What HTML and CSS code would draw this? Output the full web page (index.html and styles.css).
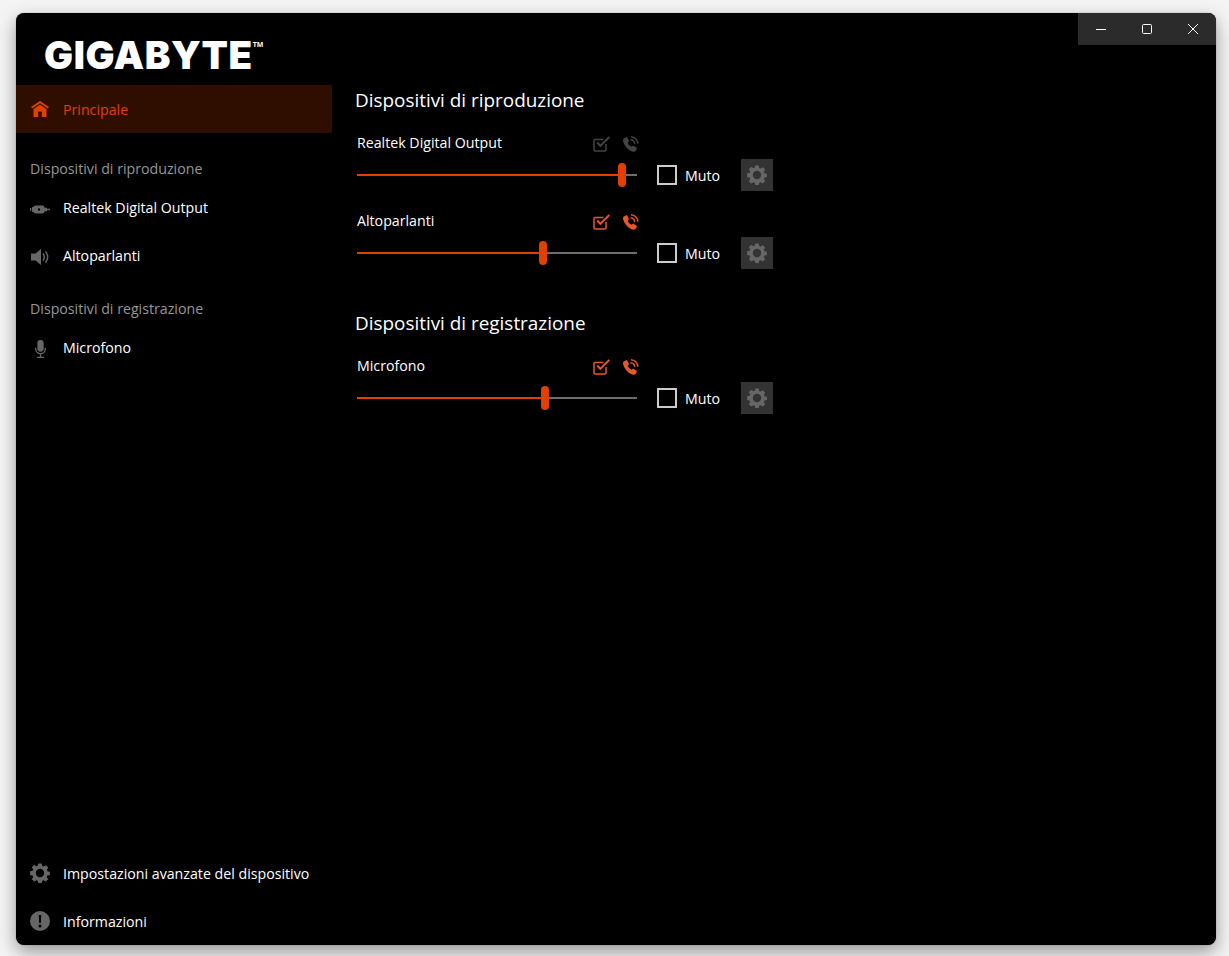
FILE: index.html
```html
<!DOCTYPE html>
<html lang="it">
<head>
<meta charset="utf-8">
<title>GIGABYTE</title>
<link rel="stylesheet" href="styles.css">
</head>
<body>
<svg class="defs" width="0" height="0" aria-hidden="true">
  <defs>
    <symbol id="i-gear" viewBox="0 0 20 20">
      <path fill-rule="evenodd" d="M8.300 0.500h3.400l.5 2.500 1.400.6 2.200-1.400 2.400 2.400-1.400 2.200.6 1.400 2.500.5v3.400l-2.500.5-.6 1.400 1.400 2.200-2.400 2.400-2.200-1.400-1.400.6-.5 2.500H8.300l-.5-2.500-1.400-.6-2.200 1.400-2.400-2.400 1.400-2.200-.6-1.400-2.500-.5V8.300l2.500-.5.6-1.400-1.400-2.200 2.400-2.400 2.200 1.400 1.400-.6zM10 5.800a4.200 4.200 0 1 0 0 8.400 4.200 4.200 0 0 0 0-8.400z"/>
    </symbol>
    <symbol id="i-check" viewBox="0 0 18 16">
      <path fill="none" stroke="currentColor" stroke-width="1.500" d="M13 8v6a1 1 0 0 1-1 1H2a1 1 0 0 1-1-1V4.500a1 1 0 0 1 1-1h8.500"/>
      <path fill="none" stroke="currentColor" stroke-width="1.900" d="M4.300 6.500l3 3.400L16.300 1"/>
    </symbol>
    <symbol id="i-phone" viewBox="0 0 18 16">
      <path fill="currentColor" d="M2.500 2 5 1l2 4-1.200 2c.7 1.600 2.200 3 3.700 3.700l1.700-1.200 3.800 2.500-1 2.500c-1 1.500-3 1.500-5 .5-4-2-7-6-8-10-.2-1.400.4-2.500 1.500-3z"/>
      <path fill="none" stroke="currentColor" stroke-width="1.500" d="M8.500 3.700c2.300.2 4 1.900 4.300 4.200M9 .8c3.700.2 6.500 3 6.900 6.800"/>
    </symbol>
  </defs>
</svg>
<div class="window">
  <aside class="sidebar">
    <div class="brand"><span class="logo">GIGABYTE</span><span class="tm">TM</span></div>
    <nav class="nav">
      <a class="item active">
        <svg class="ico" viewBox="-1 -2 20 20"><path fill="currentColor" d="M9 0 0 6l1.200 1.500L9 2.200l7.800 5.300L18 6zM2.500 8v8h4.700v-5.500h3.600V16h4.700V8L9 3.500z"/></svg>
        <span>Principale</span>
      </a>
      <div class="label first">Dispositivi di riproduzione</div>
      <a class="item">
        <svg class="ico" viewBox="0 -8.500 20 20"><path fill="currentColor" fill-rule="evenodd" d="M0 2.500h1.200v3H0zM2 1.500h1.500v5H2zM5.500 0H12.500a2 2 0 0 1 2 2v4a2 2 0 0 1-2 2H5.500a2 2 0 0 1-2-2V2a2 2 0 0 1 2-2zM9 2.800a1.200 1.200 0 1 0 0 2.400 1.200 1.200 0 0 0 0-2.400zM14.500 2.200H17v3.600h-2.500zM17 3.200H20v1.600h-3z"/></svg>
        <span>Realtek Digital Output</span>
      </a>
      <a class="item">
        <svg class="ico" viewBox="-1 -4 20 20"><path fill="currentColor" d="M0 4.500h4.500L10 0v16l-5.500-4.500H0z"/><path fill="none" stroke="currentColor" stroke-width="1.500" d="M12 4.500c1.700 1.800 1.700 5.200 0 7M14.500 2.500c2.900 3 2.900 8 0 11"/></svg>
        <span>Altoparlanti</span>
      </a>
      <div class="label">Dispositivi di registrazione</div>
      <a class="item">
        <svg class="ico" viewBox="-1.670 -3.330 22.200 22.200"><rect x="6.500" y="0" width="7" height="13" rx="3.500" fill="currentColor"/><path fill="none" stroke="currentColor" stroke-width="1.500" d="M4.700 8.500v1.500c0 3 2.300 5.200 5.300 5.200s5.300-2.200 5.300-5.200V8.500M10 15v4M6 19.300h8"/></svg>
        <span>Microfono</span>
      </a>
    </nav>
    <div class="nav-bottom">
      <a class="item">
        <svg class="ico"><use href="#i-gear"/></svg>
        <span>Impostazioni avanzate del dispositivo</span>
      </a>
      <a class="item">
        <svg class="ico" viewBox="0 0 20 20"><path fill="currentColor" fill-rule="evenodd" d="M10 0a10 10 0 1 1 0 20 10 10 0 0 1 0-20zM8.800 4l.4 8h1.600l.4-8zM10 13.400a1.500 1.500 0 1 0 0 3 1.500 1.500 0 0 0 0-3z"/></svg>
        <span>Informazioni</span>
      </a>
    </div>
  </aside>
  <main class="main">
    <div class="caption">
      <button class="cap-btn" aria-label="Riduci"><svg viewBox="0 0 12 12"><path d="M1 6.500h10"/></svg></button>
      <button class="cap-btn" aria-label="Ingrandisci"><svg viewBox="0 0 12 12"><rect x="1.500" y="1.500" width="9" height="9" rx="1"/></svg></button>
      <button class="cap-btn" aria-label="Chiudi"><svg viewBox="0 0 12 12"><path d="M1 1l10 10M11 1L1 11"/></svg></button>
    </div>
    <section class="group">
      <h2>Dispositivi di riproduzione</h2>
      <div class="device">
        <div class="device-head off">
          <span class="device-name">Realtek Digital Output</span>
          <span class="flags">
            <svg class="flag"><use href="#i-check"/></svg>
            <svg class="flag"><use href="#i-phone"/></svg>
          </span>
        </div>
        <div class="controls">
          <div class="slider"><div class="fill" style="width:94.6%"><span class="thumb"></span></div></div>
          <label class="mute"><span class="box"></span>Muto</label>
          <button class="gear-btn" aria-label="Impostazioni"><svg><use href="#i-gear"/></svg></button>
        </div>
      </div>
      <div class="device">
        <div class="device-head">
          <span class="device-name">Altoparlanti</span>
          <span class="flags">
            <svg class="flag"><use href="#i-check"/></svg>
            <svg class="flag"><use href="#i-phone"/></svg>
          </span>
        </div>
        <div class="controls">
          <div class="slider"><div class="fill" style="width:66.4%"><span class="thumb"></span></div></div>
          <label class="mute"><span class="box"></span>Muto</label>
          <button class="gear-btn" aria-label="Impostazioni"><svg><use href="#i-gear"/></svg></button>
        </div>
      </div>
    </section>
    <section class="group">
      <h2>Dispositivi di registrazione</h2>
      <div class="device">
        <div class="device-head">
          <span class="device-name">Microfono</span>
          <span class="flags">
            <svg class="flag"><use href="#i-check"/></svg>
            <svg class="flag"><use href="#i-phone"/></svg>
          </span>
        </div>
        <div class="controls">
          <div class="slider"><div class="fill" style="width:67.1%"><span class="thumb"></span></div></div>
          <label class="mute"><span class="box"></span>Muto</label>
          <button class="gear-btn" aria-label="Impostazioni"><svg><use href="#i-gear"/></svg></button>
        </div>
      </div>
    </section>
  </main>
</div>
</body>
</html>
```
FILE: styles.css
```css
* { box-sizing: border-box; }
html, body { margin: 0; height: 100%; }
body {
  background: #f4f4f4;
  padding: 13px 13px 11px 16px;
  font-family: "Open Sans", "Noto Sans", sans-serif;
  font-size: 14.2px;
  color: #fff;
  overflow: hidden;
}
.defs { position: absolute; }
.window {
  display: flex;
  height: 932px;
  background: #000;
  border-radius: 8px;
  box-shadow: 0 0 1px rgba(0,0,0,.5), 0 7px 18px rgba(0,0,0,.38);
  overflow: hidden;
}
.sidebar {
  width: 316px;
  flex: none;
  display: flex;
  flex-direction: column;
}
.brand {
  height: 72px;
  flex: none;
  display: flex;
  align-items: flex-start;
  padding: 21px 0 0 28px;
}
.logo {
  font-family: "Inter", sans-serif;
  font-weight: 900;
  font-size: 38.5px;
  line-height: 42px;
  letter-spacing: 0.6px;
}
.tm { font-size: 7px; font-weight: 700; line-height: 8px; margin-top: 7px; }
.nav { flex: 1; }
.item {
  display: flex;
  align-items: center;
  height: 48px;
  padding-left: 14px;
  gap: 13px;
  color: #fff;
}
.item .ico { width: 20px; height: 20px; flex: none; color: #666; fill: #666; overflow: visible; }
.item.active { background: #2f0e00; color: #e04000; }
.item.active .ico { color: #e04000; }
.label {
  height: 28px;
  line-height: 28px;
  margin-top: 16px;
  padding-left: 14px;
  color: #969696;
}
.label.first { margin-top: 22px; }
.main { flex: 1; position: relative; padding: 74px 0 0 23px; }
.caption {
  position: absolute;
  top: 0;
  right: 0;
  display: flex;
  background: #2b2b2b;
}
.cap-btn {
  width: 46px;
  height: 32px;
  padding: 0;
  border: 0;
  background: transparent;
  display: flex;
  align-items: center;
  justify-content: center;
}
.cap-btn svg { width: 12px; height: 12px; fill: none; stroke: #fff; stroke-width: 1; }
.group { margin-bottom: 41px; }
h2 {
  margin: 0 0 18px;
  height: 26px;
  line-height: 26px;
  font-size: 18.9px;
  font-weight: 400;
}
.device { margin-bottom: 18px; }
.device:last-child { margin-bottom: 0; }
.device-head {
  display: flex;
  align-items: center;
  width: 285px;
  height: 24px;
  padding-left: 2px;
  color: #e8572a;
}
.device-head.off { color: #444; }
.device-name { flex: 1; color: #fff; padding-bottom: 2px; }
.flags { display: flex; gap: 11px; margin-top: 2px; margin-left: -1px; }
.flag { width: 18px; height: 16px; display: block; }
.controls {
  display: flex;
  align-items: center;
  height: 32px;
  margin-top: 4px;
  padding-left: 2px;
}
.slider {
  width: 280px;
  height: 2px;
  background: #6e6e6e;
  flex: none;
}
.fill { position: relative; height: 2px; background: #e04000; }
.thumb {
  position: absolute;
  right: -4px;
  top: -11px;
  width: 8px;
  height: 24px;
  border-radius: 4px;
  background: #e04000;
}
.mute {
  display: flex;
  align-items: center;
  margin-left: 20px;
  width: 84px;
  gap: 8px;
}
.box { width: 20px; height: 20px; border: 2px solid #ccc; flex: none; }
.gear-btn {
  width: 32px;
  height: 32px;
  padding: 6px;
  border: 0;
  background: #333;
  display: block;
}
.gear-btn svg { width: 20px; height: 20px; display: block; fill: #666; }
```
